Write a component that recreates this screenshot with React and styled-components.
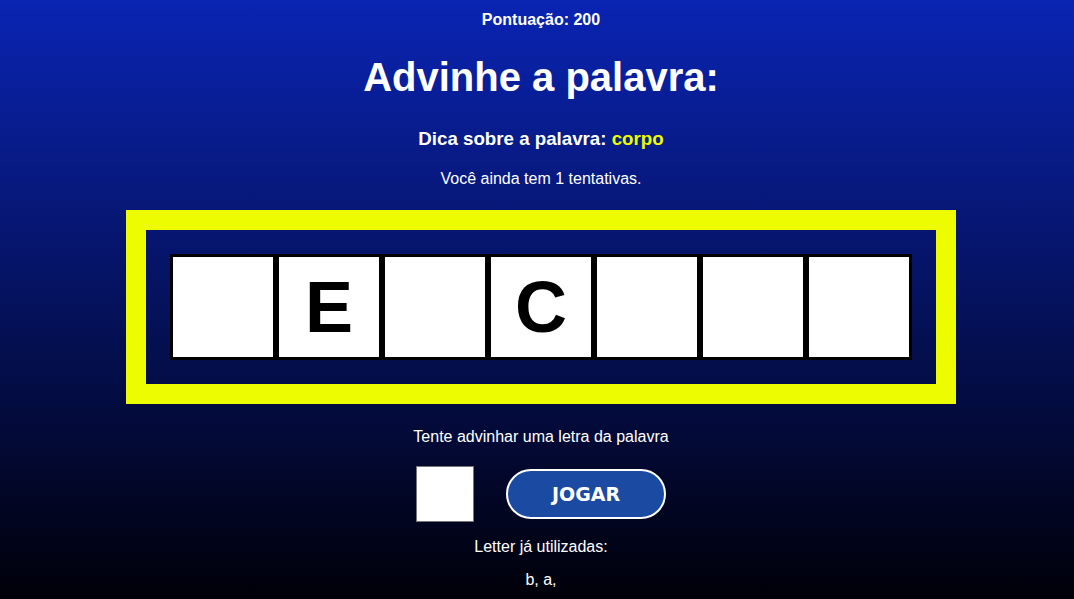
import React from "react";
import styled, { createGlobalStyle } from "styled-components";

const Global = createGlobalStyle`
  html, body { margin: 0; padding: 0; }
  body { font-family: "Liberation Sans", Arial, sans-serif; }
  * { box-sizing: border-box; }
`;

const Page = styled.div`
  height: 100vh;
  overflow: hidden;
  padding-left: 8px;
  background: linear-gradient(to bottom, #0a24b3 0%, #000008 100%);
  color: #fff;
  display: flex;
  flex-direction: column;
  align-items: center;
  text-align: center;
`;

const Score = styled.div`
  margin-top: 11px;
  font-size: 16px;
  font-weight: 700;
  line-height: 18px;
`;

const Title = styled.h1`
  margin: 25px 0 0;
  font-size: 40px;
  font-weight: 700;
  line-height: 46px;
`;

const Hint = styled.h3`
  margin: 28px 0 0;
  font-size: 18.72px;
  font-weight: 700;
  line-height: 22px;
`;

const HintWord = styled.span`
  color: #eefc00;
`;

const Text = styled.p`
  margin: ${(p) => p.$mt}px 0 0;
  font-size: 16px;
  line-height: 18px;
`;

const Frame = styled.div`
  margin-top: 22px;
  border: 20px solid #eefc00;
  padding: 24px;
  display: flex;
`;

const Cell = styled.div`
  width: 106px;
  height: 106px;
  border: 3px solid #000;
  background: #fff;
  color: #000;
  display: flex;
  align-items: center;
  justify-content: center;
  font-size: 72px;
  font-weight: 700;
  line-height: 1;
`;

const PlayRow = styled.div`
  margin-top: 20px;
  display: flex;
  align-items: center;
  gap: 32px;
`;

const LetterInput = styled.input`
  width: 58px;
  height: 56px;
  border: 1px solid #767676;
  background: #fff;
  font-size: 28px;
  text-align: center;
  padding: 0;
  outline: none;
`;

const PlayButton = styled.button`
  width: 160px;
  height: 50px;
  border: 2px solid #fff;
  border-radius: 25px;
  background: #1b4aa3;
  color: #fff;
  font-family: "DejaVu Sans", Verdana, sans-serif;
  font-size: 19px;
  font-weight: 700;
  cursor: pointer;
`;

const letters = ["", "E", "", "C", "", "", ""];

export default function App() {
  return (
    <>
      <Global />
      <Page>
        <Score>Pontuação: 200</Score>
        <Title>Advinhe a palavra:</Title>
        <Hint>
          Dica sobre a palavra: <HintWord>corpo</HintWord>
        </Hint>
        <Text $mt={20}>Você ainda tem 1 tentativas.</Text>
        <Frame>
          {letters.map((l, i) => (
            <Cell key={i}>{l}</Cell>
          ))}
        </Frame>
        <Text $mt={24}>Tente advinhar uma letra da palavra</Text>
        <PlayRow>
          <LetterInput maxLength={1} />
          <PlayButton>JOGAR</PlayButton>
        </PlayRow>
        <Text $mt={16}>Letter já utilizadas:</Text>
        <Text $mt={15}>b, a,</Text>
      </Page>
    </>
  );
}
